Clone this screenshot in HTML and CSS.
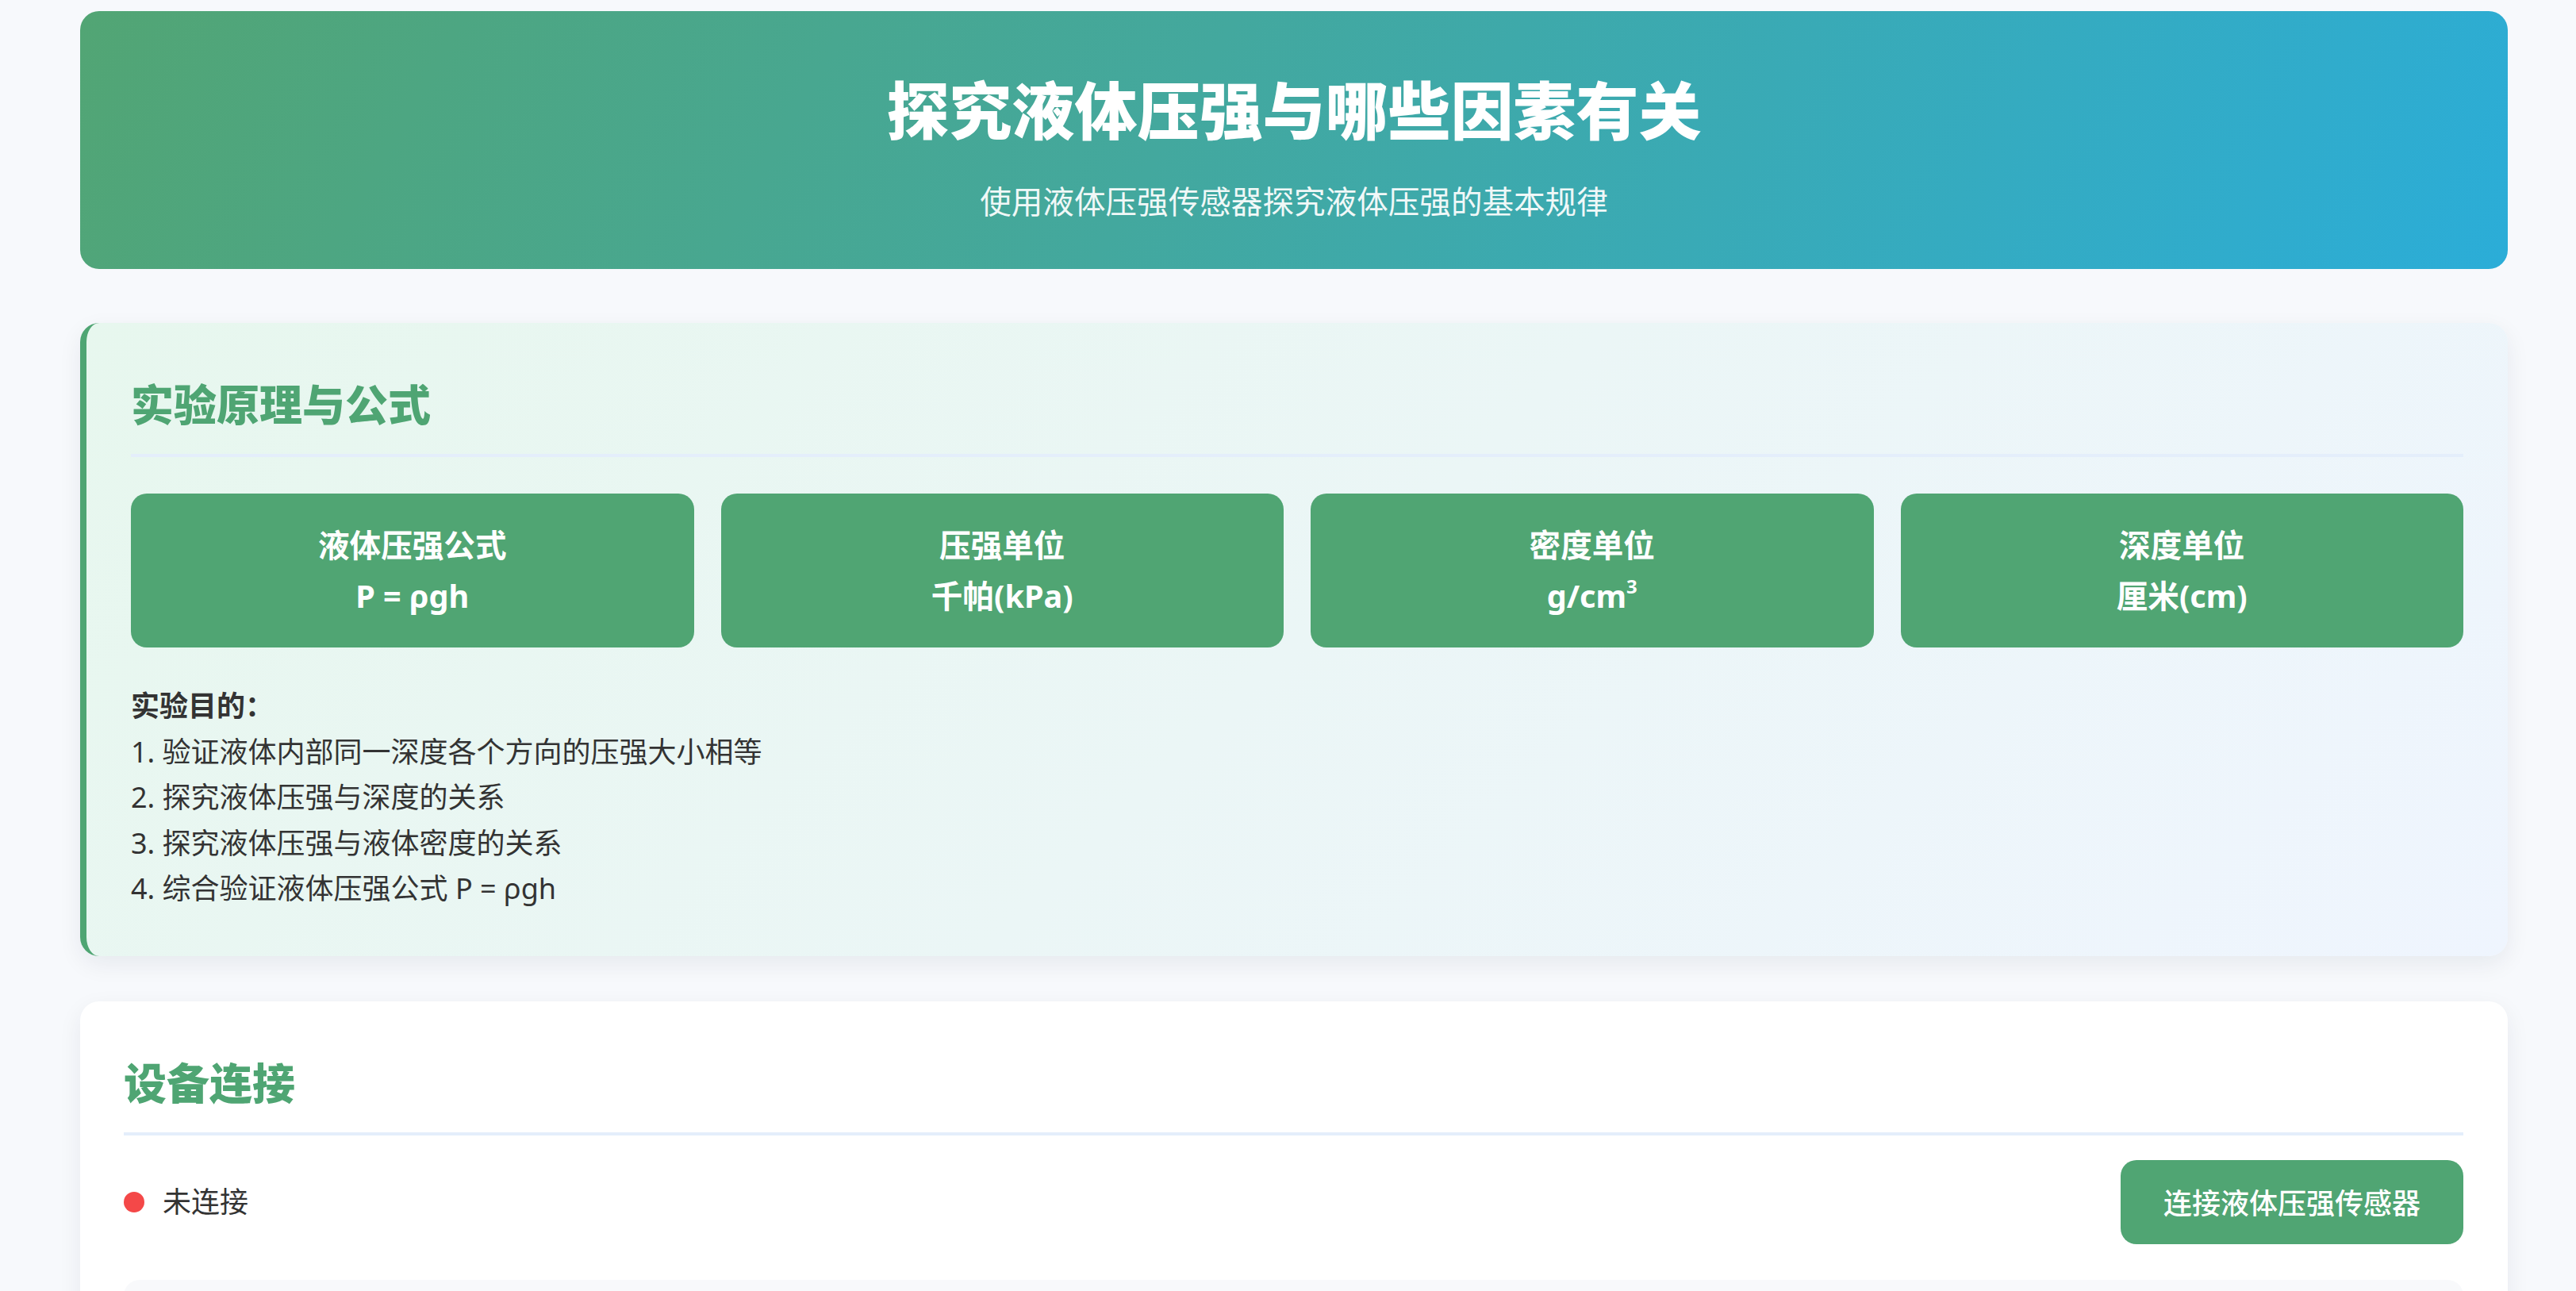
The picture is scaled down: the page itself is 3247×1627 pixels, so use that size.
FILE: index.html
```html
<!DOCTYPE html>
<html lang="zh-CN">
<head>
<meta charset="utf-8">
<title>探究液体压强与哪些因素有关</title>
<link rel="stylesheet" href="styles.css">
</head>
<body>
<div class="container">
  <header class="hero">
    <h1 class="hero-title">探究液体压强与哪些因素有关</h1>
    <p class="hero-sub">使用液体压强传感器探究液体压强的基本规律</p>
  </header>

  <section class="card card-theory">
    <h2 class="card-title">实验原理与公式</h2>
    <div class="formula-grid">
      <div class="formula-box"><div>液体压强公式</div><div>P = ρgh</div></div>
      <div class="formula-box"><div>压强单位</div><div>千帕(kPa)</div></div>
      <div class="formula-box"><div>密度单位</div><div>g/cm<sup>3</sup></div></div>
      <div class="formula-box"><div>深度单位</div><div>厘米(cm)</div></div>
    </div>
    <div class="purpose">
      <div class="purpose-title">实验目的：</div>
      <div>1. 验证液体内部同一深度各个方向的压强大小相等</div>
      <div>2. 探究液体压强与深度的关系</div>
      <div>3. 探究液体压强与液体密度的关系</div>
      <div>4. 综合验证液体压强公式 P = ρgh</div>
    </div>
  </section>

  <section class="card card-device">
    <h2 class="card-title">设备连接</h2>
    <div class="status-row">
      <div class="status"><span class="dot"></span><span>未连接</span></div>
      <button class="btn">连接液体压强传感器</button>
    </div>
    <div class="data-panel"></div>
  </section>
</div>
</body>
</html>
```

FILE: styles.css
```css
* { box-sizing: border-box; }

body {
  margin: 0;
  background: #f7f9fc;
  font-family: "Noto Sans", "Noto Sans CJK SC", sans-serif;
  font-size: 36px;
  line-height: 1.6;
  color: #333;
}

.container {
  width: 3060px;
  margin-left: 101px;
  padding-top: 14px;
  padding-bottom: 60px;
}

.hero {
  border-radius: 24px;
  background: linear-gradient(120deg, #52a574 0%, #43a89e 45%, #2badd8 100%);
  color: #fff;
  text-align: center;
  padding: 78px 40px 53px;
}

.hero-title {
  margin: 0;
  font-size: 79px;
  line-height: 95px;
  font-weight: 800;
}

.hero-sub {
  margin: 35px 0 0;
  font-size: 39.6px;
  line-height: 64px;
  opacity: 0.92;
}

.card {
  border-radius: 24px;
  padding: 56px;
  box-shadow: 0 10px 30px rgba(20, 30, 60, 0.07);
}

.card-theory {
  margin-top: 68px;
  border-left: 8px solid #4fa573;
  background: linear-gradient(135deg, #e7f7ee 0%, #ebf6f6 50%, #eff5fe 100%);
}

.card-device {
  margin-top: 57px;
  background: #fff;
  padding-left: 55px;
}

.card-title {
  margin: 0 0 46px;
  font-size: 54px;
  line-height: 86px;
  font-weight: 800;
  color: #4fa573;
  padding-top: 4px;
  padding-bottom: 19px;
  border-bottom: 4px solid #e4eefb;
}

.formula-grid {
  display: grid;
  grid-template-columns: repeat(4, 1fr);
  gap: 34px;
}

.formula-box {
  background: #50a573;
  color: #fff;
  border-radius: 20px;
  padding: 33px 10px;
  text-align: center;
  font-size: 39.6px;
  line-height: 64px;
  font-weight: 700;
}

.formula-box sup {
  font-size: 24px;
  line-height: 0;
  vertical-align: 18px;
}

.purpose {
  margin-top: 45px;
  line-height: 57.6px;
}

.purpose-title {
  font-weight: 700;
}

.card-device .card-title {
  margin-bottom: 31px;
}

.status-row {
  display: flex;
  justify-content: space-between;
  align-items: center;
}

.status {
  display: flex;
  align-items: center;
  gap: 23px;
}

.dot {
  width: 26px;
  height: 26px;
  border-radius: 50%;
  background: #f44848;
}

.btn {
  height: 106px;
  padding: 0 54px;
  border: none;
  border-radius: 20px;
  background: #50a573;
  color: #fff;
  font-family: "Noto Sans", "Noto Sans CJK SC", sans-serif;
  font-size: 36px;
  font-weight: 500;
}

.data-panel {
  margin-top: 45px;
  height: 300px;
  border-radius: 20px;
  background: #f8f9fb;
}
```
